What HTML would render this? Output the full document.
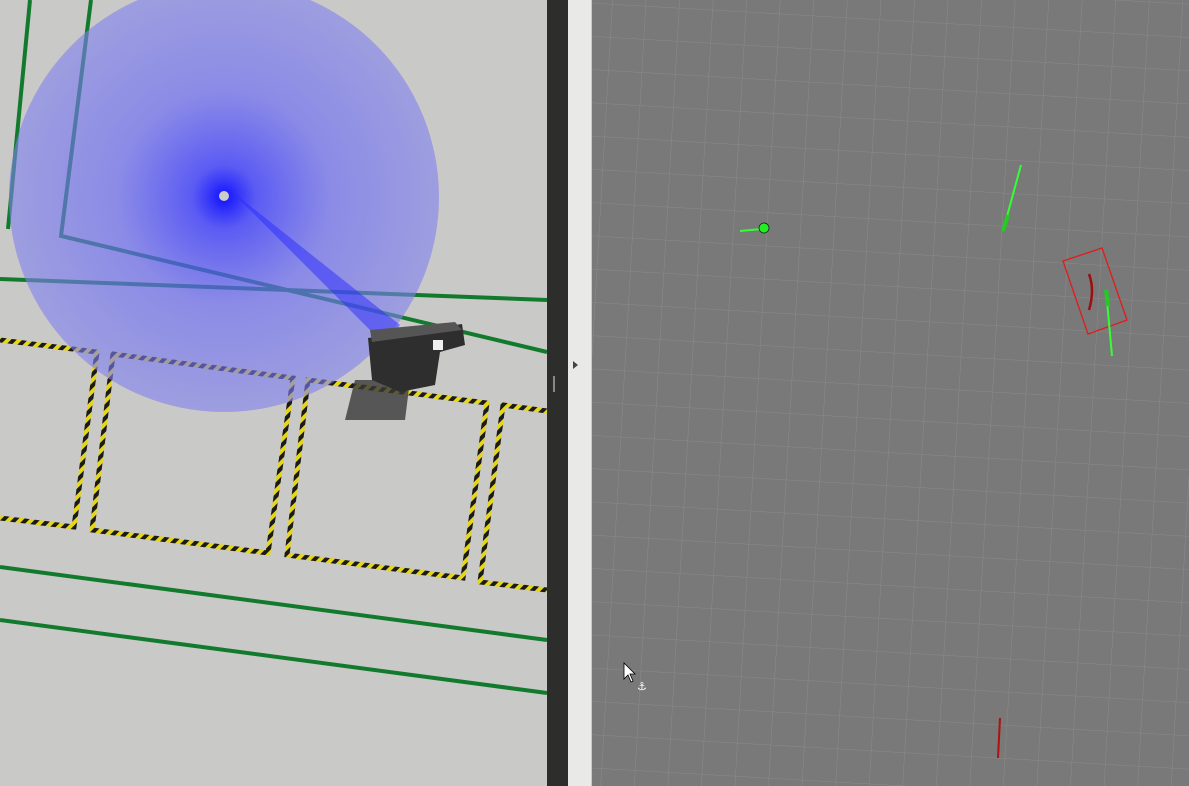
<!DOCTYPE html>
<html><head><meta charset="utf-8"><style>
html,body{margin:0;padding:0;width:1189px;height:786px;overflow:hidden;background:#787878}
svg{display:block}
</style></head><body>
<svg width="1189" height="786" viewBox="0 0 1189 786" xmlns="http://www.w3.org/2000/svg">
<defs>
<clipPath id="rc"><rect x="592" y="0" width="597" height="786"/></clipPath>
<pattern id="grid" width="33.5" height="33.2" patternUnits="userSpaceOnUse">
<path d="M0 0H33.5M0 0V33.2" stroke="#8a8a8a" stroke-width="1" fill="none"/>
</pattern>
<pattern id="haz" width="8" height="8" patternUnits="userSpaceOnUse" patternTransform="rotate(45)">
<rect width="8" height="8" fill="#e6d61a"/><rect width="4" height="8" fill="#1a1a1a"/>
</pattern>
<radialGradient id="bl" cx="0.5" cy="0.5" r="0.5">
<stop offset="0" stop-color="#1010ff" stop-opacity="1"/>
<stop offset="0.15" stop-color="#4040ff" stop-opacity="0.8"/>
<stop offset="0.5" stop-color="#6a6af8" stop-opacity="0.65"/>
<stop offset="1" stop-color="#8080f0" stop-opacity="0.6"/>
</radialGradient>
</defs>
<rect x="0" y="0" width="547" height="786" fill="#c9c9c7"/>
<g fill="none" stroke="#127a2c" stroke-width="4">
<path d="M91 0 L61 236 L547 352"/>
<path d="M30 0 L8 229"/>
<path d="M0 279 L547 300"/>
<path d="M0 567 L547 640"/>
<path d="M0 620 L547 693"/>
</g>
<g fill="none" stroke="url(#haz)" stroke-width="5">
<path d="M0 340 L97 352 L74 527 L0 518"/>
<path d="M113 354 L293 378 L268 553 L92 530 Z"/>
<path d="M308 380 L487 403 L463 578 L287 555 Z"/>
<path d="M547 411 L503 405 L480 582 L547 590"/>
</g>
<circle cx="224" cy="197" r="215" fill="url(#bl)"/>
<path d="M230 190 L400 325 L385 345 Z" fill="#2a2aff" opacity="0.5"/>
<circle cx="224" cy="196" r="5" fill="#ccc"/>
<path d="M355 380 L410 380 L405 420 L345 420 Z" fill="#3a3a3a" opacity="0.8"/>
<path d="M368 338 L462 324 L465 345 L440 352 L435 385 L400 392 L372 380 Z" fill="#2e2e2e"/>
<path d="M370 330 L455 322 L462 330 L372 342 Z" fill="#555"/>
<rect x="433" y="340" width="10" height="10" fill="#eee"/>
<rect x="547" y="0" width="21" height="786" fill="#2d2d2b"/>
<rect x="568" y="0" width="24" height="786" fill="#e9e9e7"/>
<rect x="591" y="0" width="1" height="786" fill="#c8c8c8"/>
<path d="M573 361 L578 365 L573 369 Z" fill="#444"/>
<rect x="553" y="376" width="2" height="16" fill="#888"/>
<rect x="592" y="0" width="597" height="786" fill="#797979"/>
<g clip-path="url(#rc)">
<g transform="translate(612,4) rotate(3.3)">
<rect x="-120" y="-60" width="800" height="900" fill="url(#grid)"/>
</g>
</g>
<line x1="740" y1="231" x2="762" y2="229" stroke="#3f3" stroke-width="2"/>
<circle cx="764" cy="228" r="5" fill="#2e2" stroke="#111" stroke-width="0.7"/>
<line x1="1021" y1="165" x2="1003" y2="231" stroke="#3f3" stroke-width="2"/>
<line x1="1008" y1="215" x2="1003" y2="231" stroke="#2c2" stroke-width="4"/>
<path d="M1063 261 L1102 248 L1127 320 L1088 334 Z" fill="none" stroke="#e01c1c" stroke-width="1.3"/>
<path d="M1089 274 Q1095 290 1089 310" fill="none" stroke="#9a1010" stroke-width="2.5"/>
<line x1="1106" y1="290" x2="1112" y2="356" stroke="#3f3" stroke-width="2"/>
<line x1="1106" y1="290" x2="1108" y2="306" stroke="#2c2" stroke-width="4"/>
<line x1="1000" y1="718" x2="998" y2="758" stroke="#b01010" stroke-width="2"/>
<path d="M624 663 L624 679 L628 675 L631 682 L633 681 L630 674 L635 674 Z" fill="#fff" stroke="#000" stroke-width="0.8"/>
<text x="637" y="690" font-family="DejaVu Sans, sans-serif" font-size="11" fill="#fff">⚓</text>
</svg>
</body></html>
